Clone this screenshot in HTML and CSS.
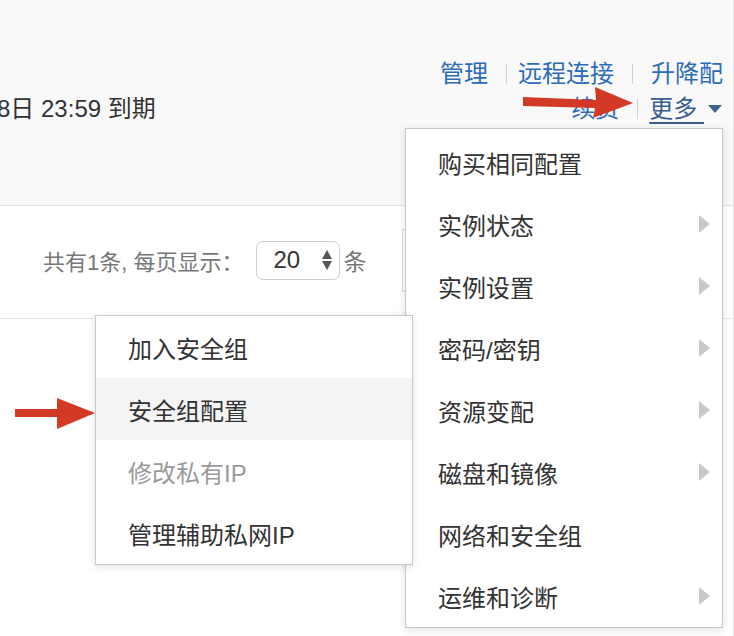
FILE: index.html
```html
<!DOCTYPE html>
<html lang="zh-CN">
<head>
<meta charset="utf-8">
<title>实例操作</title>
<link rel="stylesheet" href="styles.css">
</head>
<body>
<div class="page">
  <section class="summary">
    <div class="expire">8日 23:59 到期</div>
    <div class="actions">
      <div class="row">
        <a class="link" href="#">管理</a><span class="sep sep-narrow"></span><a class="link" href="#">远程连接</a><span class="sep"></span><a class="link" href="#">升降配</a>
      </div>
      <div class="row">
        <a class="link" href="#">续费</a><span class="sep sep-narrow"></span><a class="link more" href="#">更多&nbsp;</a><span class="caret"></span>
      </div>
    </div>
  </section>

  <section class="pager">
    <span class="pager-text">共有1条, 每页显示：</span>
    <div class="size-select">
      <span class="size-value">20</span>
      <span class="spinner"><span class="spin-up"></span><span class="spin-down"></span></span>
    </div>
    <span class="unit">条</span>
    <div class="page-box"></div>
  </section>

  <div class="menu menu-main">
    <div class="item">购买相同配置</div>
    <div class="item">实例状态<span class="sub-arrow"></span></div>
    <div class="item">实例设置<span class="sub-arrow"></span></div>
    <div class="item">密码/密钥<span class="sub-arrow"></span></div>
    <div class="item">资源变配<span class="sub-arrow"></span></div>
    <div class="item">磁盘和镜像<span class="sub-arrow"></span></div>
    <div class="item">网络和安全组</div>
    <div class="item">运维和诊断<span class="sub-arrow"></span></div>
  </div>

  <div class="menu menu-sub">
    <div class="item">加入安全组</div>
    <div class="item active">安全组配置</div>
    <div class="item disabled">修改私有IP</div>
    <div class="item">管理辅助私网IP</div>
  </div>

  <svg class="annot" width="734" height="636" viewBox="0 0 734 636" aria-hidden="true">
    <polygon fill="#d33a26" points="523,97 596,100 595,87 633,103 593,118 595,108 523,106"/>
    <polygon fill="#d33a26" points="15,409 57,409 57,398 95,413 57,429 57,417 15,417"/>
  </svg>
</div>
</body>
</html>
```

FILE: styles.css
```css
html, body {
  margin: 0;
  padding: 0;
  background: #fff;
}

body {
  font-family: "Liberation Sans", "Noto Sans CJK SC", sans-serif;
}

.page {
  position: relative;
  width: 733px;
  height: 636px;
  border-right: 1px solid #e4e6ea;
  overflow: hidden;
  background: #fff;
}

.summary {
  height: 206px;
  box-sizing: border-box;
  background: #f9f9f9;
  border-bottom: 1px solid #e1e1e1;
  display: flex;
  justify-content: space-between;
  align-items: flex-start;
  padding: 56px 10px 0 0;
}

.expire {
  margin-top: 35px;
  margin-left: -3px;
  font-size: 24px;
  line-height: 35px;
  color: #333;
}

.actions {
  display: flex;
  flex-direction: column;
  align-items: flex-end;
  font-size: 24px;
  line-height: 35px;
}

.row {
  display: flex;
  align-items: center;
}

.link {
  color: #2b6bb8;
  text-decoration: none;
}

.sep {
  width: 1px;
  height: 20px;
  background: #cfcfcf;
  margin: 0 18px;
}

.sep-narrow {
  margin-right: 11px;
}

.more {
  color: #3a5d8c;
  text-decoration: underline;
  text-decoration-thickness: 2px;
  text-underline-offset: 5px;
}

.caret {
  width: 0;
  height: 0;
  border-left: 7px solid transparent;
  border-right: 7px solid transparent;
  border-top: 8px solid #3d6491;
  margin-left: 4px;
  margin-right: 1px;
}

.pager {
  height: 113px;
  box-sizing: border-box;
  border-bottom: 1px solid #e3e8ee;
  display: flex;
  align-items: center;
  padding: 0 0 4px 43px;
  color: #777;
  font-size: 22px;
}

.size-select {
  margin-left: 13px;
  width: 84px;
  height: 39px;
  box-sizing: border-box;
  border: 1.5px solid #cdcdcd;
  border-radius: 7px;
  display: flex;
  align-items: center;
  justify-content: space-between;
  padding: 0 7px 0 16px;
  color: #333;
  font-size: 24px;
}

.spinner {
  display: flex;
  flex-direction: column;
  gap: 2px;
}

.spin-up {
  width: 0;
  height: 0;
  border-left: 5px solid transparent;
  border-right: 5px solid transparent;
  border-bottom: 9px solid #555;
}

.spin-down {
  width: 0;
  height: 0;
  border-left: 5px solid transparent;
  border-right: 5px solid transparent;
  border-top: 9px solid #555;
}

.unit {
  margin-left: 3px;
  font-size: 23px;
}

.page-box {
  margin-left: 36px;
  width: 120px;
  height: 63px;
  box-sizing: border-box;
  border: 1px solid #d9d9d9;
}

.menu {
  position: absolute;
  background: #fff;
  border: 1px solid #c9c9c9;
  box-shadow: 0 2px 8px rgba(0, 0, 0, 0.12);
  font-size: 24px;
  color: #333;
  font-family: "Liberation Sans", "Noto Sans CJK SC", sans-serif;
}

.menu-main {
  left: 405px;
  top: 128px;
  width: 318px;
  box-sizing: border-box;
  padding-top: 2px;
  z-index: 1;
}

.menu-sub {
  left: 95px;
  top: 315px;
  width: 318px;
  box-sizing: border-box;
  z-index: 2;
}

.item {
  height: 62px;
  display: flex;
  align-items: center;
  justify-content: space-between;
  padding: 0 12px 0 32px;
}

.item.active {
  background: #f4f4f4;
}

.item.disabled {
  color: #9a9a9a;
}

.sub-arrow {
  width: 0;
  height: 0;
  border-top: 9.5px solid transparent;
  border-bottom: 9.5px solid transparent;
  border-left: 11px solid #c9c9c9;
}

.annot {
  position: absolute;
  left: 0;
  top: 0;
  z-index: 3;
  pointer-events: none;
}
```
